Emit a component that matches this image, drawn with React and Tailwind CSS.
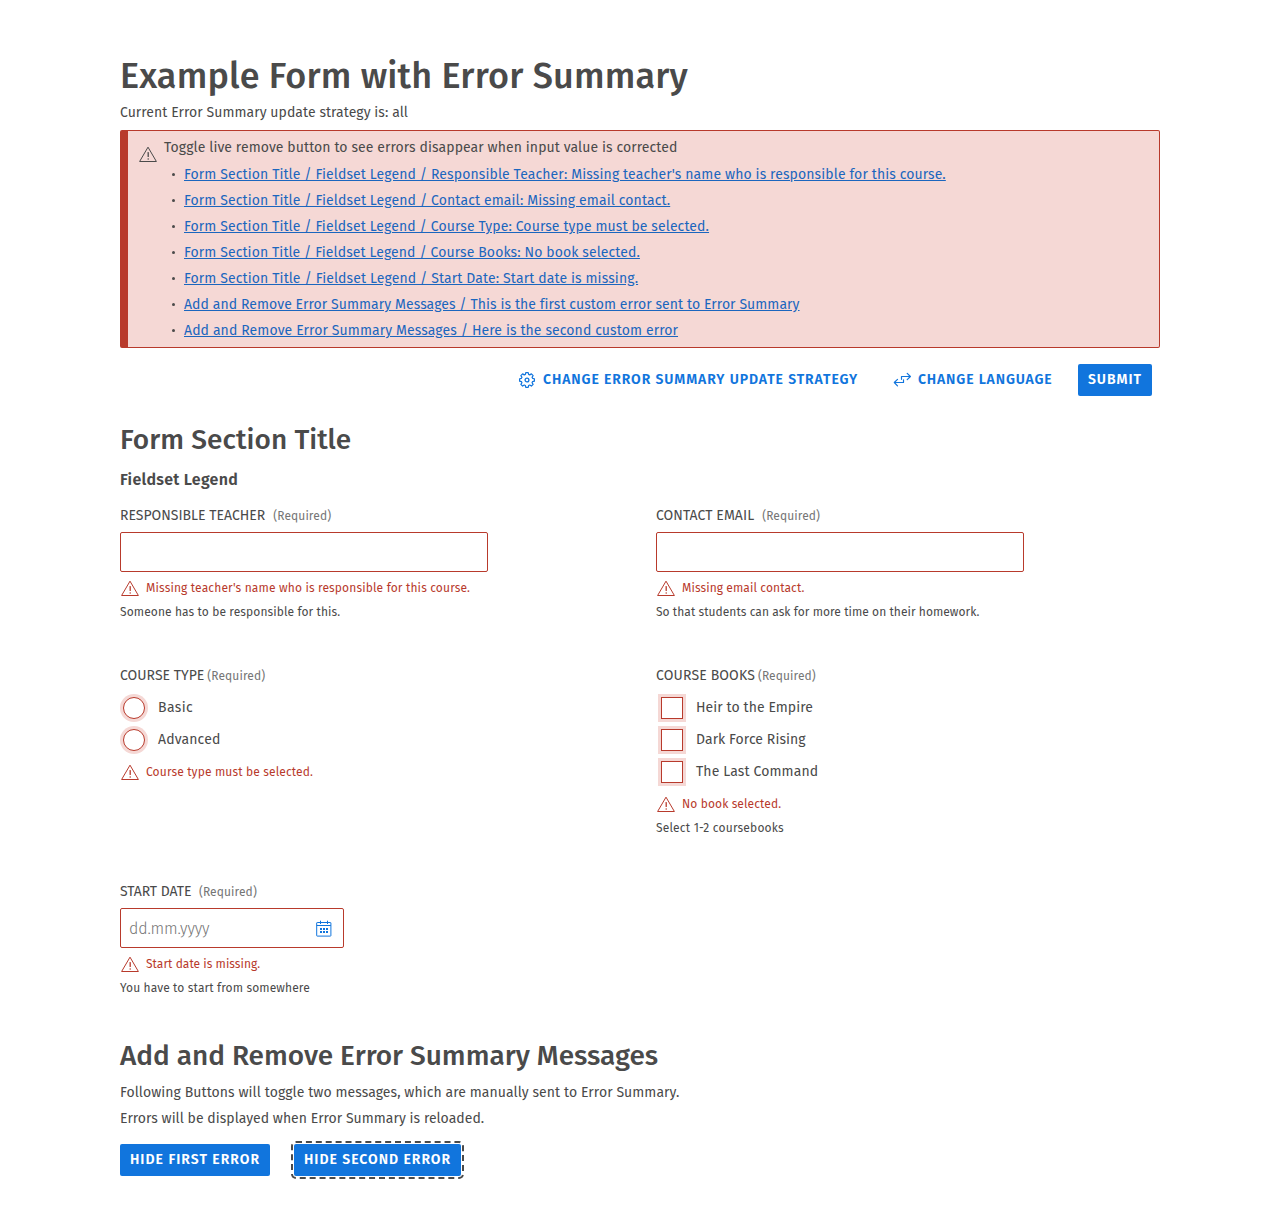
import React from "react";

const Text = ({ className = "", children, as: Tag = "span" }) => (
  <Tag className={"inline-block whitespace-nowrap " + className}>{children}</Tag>
);

const Warning = ({ className }) => (
  <svg viewBox="0 0 20 20" className={"size-5 shrink-0 " + className} fill="none" stroke="currentColor" strokeWidth="1" strokeLinejoin="round" strokeLinecap="round">
    <path d="M10.2 3.5 L18.4 17.5 H2 Z" />
    <path d="M10.2 8.6 V12.4" strokeWidth="1.3" />
    <circle cx="10.2" cy="14.9" r=".75" fill="currentColor" stroke="none" />
  </svg>
);

const Gear = () => (
  <svg viewBox="0 0 20 20" className="size-5" fill="none" stroke="currentColor" strokeWidth="1.45" strokeLinejoin="round">
    <path d="M8.6 2.4h2.8l.5 2.1 1.3.6 1.9-1.2 2 2-1.2 1.9.6 1.3 2.1.5v2.8l-2.1.5-.6 1.3 1.2 1.9-2 2-1.9-1.2-1.3.6-.5 2.1H8.6l-.5-2.1-1.3-.6-1.9 1.2-2-2 1.2-1.9-.6-1.3-2.1-.5V9.6l2.1-.5.6-1.3-1.2-1.9 2-2 1.9 1.2 1.3-.6z" transform="translate(1.4 .5) scale(.86)" />
    <circle cx="10" cy="10" r="1.9" strokeWidth="1.3" />
  </svg>
);

const Swap = () => (
  <svg viewBox="0 0 20 20" className="size-5" fill="none" stroke="currentColor" strokeWidth="1.2" strokeLinecap="round" strokeLinejoin="round">
    <path d="M18.2 6.5H9.5V9.3M15.2 3.3l3.2 3.2-3.2 3.2M2.4 12.5H11.5V9.8M5.5 9.4L2.3 12.5l3.2 3.3" />
  </svg>
);

const Calendar = () => (
  <svg viewBox="0 0 20 20" className="mt-0.5 size-5 text-[#1175dd]" fill="none" stroke="currentColor" strokeWidth="1">
    <rect x="2.7" y="3.5" width="14.2" height="13.6" rx=".5" />
    <path d="M2.7 6.5h14.2M6.5 1.7v3.3M13.5 1.7v3.3" />
    <path d="M6 10h8M6 13h8" strokeWidth="2" strokeDasharray="2 1" />
  </svg>
);

const links = [
  ["Form Section Title / Fieldset Legend / Responsible Teacher: Missing teacher's name who is responsible for this course.", "tracking-[0.11px]"],
  ["Form Section Title / Fieldset Legend / Contact email: Missing email contact.", "tracking-[0.113px]"],
  ["Form Section Title / Fieldset Legend / Course Type: Course type must be selected.", "tracking-[0.105px]"],
  ["Form Section Title / Fieldset Legend / Course Books: No book selected.", "tracking-[0.1px]"],
  ["Form Section Title / Fieldset Legend / Start Date: Start date is missing.", "tracking-[0.118px]"],
  ["Add and Remove Error Summary Messages / This is the first custom error sent to Error Summary", "tracking-[0.07px]"],
  ["Add and Remove Error Summary Messages / Here is the second custom error", "tracking-[0.105px]"],
];

const Label = ({ text, t = "", gap }) => (
  <div className="flex h-8 items-center">
    <Text className={t}>{text}</Text>
    <Text className={"text-xs text-[#757575] tracking-[0.1px] " + gap}>(Required)</Text>
  </div>
);

const Err = ({ text, t = "" }) => (
  <div className="flex h-6 items-center gap-1.5 text-xs text-[#b83a2c]">
    <Warning className="-mt-px" />
    <Text className={t}>{text}</Text>
  </div>
);

const Help = ({ text, t = "" }) => (
  <div className="flex h-6 items-center text-xs">
    <Text className={t}>{text}</Text>
  </div>
);

const Btn = ({ children, className = "" }) => (
  <button className={"flex h-8 items-center rounded-xs bg-[#1175dd] pl-2.5 font-semibold text-white " + className}>
    <Text>{children}</Text>
  </button>
);

const Input = () => <input className="mb-1 block h-10 w-[368px] rounded-xs border border-[#b83a2c] px-2" />;

export default function App() {
  return (
    <main className="min-h-[1208px] bg-white px-[120px] pt-14 font-['Fira_Sans','Noto_Sans',sans-serif] text-sm text-[#4a4a4a]">
      <h1 className="flex h-10 items-center font-['Fira_Sans_Medium','Fira_Sans',sans-serif] text-4xl">
        <Text className="tracking-[0.16px]">Example Form with Error Summary</Text>
      </h1>
      <div className="mt-1 flex h-[26px] items-center">
        <Text className="tracking-[0.055px]">Current Error Summary update strategy is: all</Text>
      </div>
      <section className="mt-1 flex h-[218px] rounded-xs border border-l-8 border-[#b83a2c] bg-[#f5d8d5] pl-2.5 pt-[3px]">
        <Warning className="mt-2.5" />
        <div className="ml-1.5">
          <div className="flex h-[27px] items-center">
            <Text className="tracking-[0.088px]">Toggle live remove button to see errors disappear when input value is corrected</Text>
          </div>
          <ul>
            {links.map(([text, t]) => (
              <li key={text} className="flex h-[26px] items-center gap-[9px] pl-2">
                <span className="size-[3px] rounded-full bg-current" />
                <Text as="a" className={"mt-0.5 text-[#1b66be] underline " + t}>{text}</Text>
              </li>
            ))}
          </ul>
        </div>
      </section>
      <div className="mt-4 flex h-8 items-center justify-end pr-2 font-semibold text-[#1175dd]">
        <div className="flex items-center gap-1.5">
          <Gear />
          <Text className="w-[316px] tracking-[0.9px]">CHANGE ERROR SUMMARY UPDATE STRATEGY</Text>
        </div>
        <div className="ml-[33px] mr-[25px] flex items-center gap-1.5">
          <Swap />
          <Text className="w-[135px] tracking-[0.85px]">CHANGE LANGUAGE</Text>
        </div>
        <Btn className="w-[74px] tracking-[0.96px]">SUBMIT</Btn>
      </div>
      <h2 className="mt-6 flex h-10 items-center font-['Fira_Sans_Medium','Fira_Sans',sans-serif] text-[28px]">
        <Text className="tracking-[0.08px]">Form Section Title</Text>
      </h2>
      <div className="mt-2 flex h-6 items-center text-base font-semibold">
        <Text className="tracking-[0.27px]">Fieldset Legend</Text>
      </div>
      <div className="mt-2 grid grid-cols-[536px_1fr]">
        <div className="h-40">
          <Label text="RESPONSIBLE TEACHER" gap="ml-2" />
          <Input />
          <Err text="Missing teacher's name who is responsible for this course." t="tracking-[0.147px]" />
          <Help text="Someone has to be responsible for this." t="tracking-[0.1px]" />
        </div>
        <div className="h-40">
          <Label text="CONTACT EMAIL" t="tracking-[0.06px]" gap="ml-2" />
          <Input />
          <Err text="Missing email contact." t="tracking-[0.09px]" />
          <Help text="So that students can ask for more time on their homework." t="tracking-[0.045px]" />
        </div>
        <div className="h-[216px]">
          <Label text="COURSE TYPE" gap="ml-[3px]" />
          {[["Basic", "tracking-[0.4px]"], ["Advanced", "tracking-[0.15px]"]].map(([text, t]) => (
            <div key={text} className="flex h-8 items-center">
              <span className="ml-[3.4px] size-[22px] rounded-full border border-[#b83a2c] bg-white ring-3 ring-[#f5d8d5]" />
              <Text className={"ml-[12.6px] " + t}>{text}</Text>
            </div>
          ))}
          <div className="mt-1">
            <Err text="Course type must be selected." t="tracking-[0.138px]" />
          </div>
        </div>
        <div className="h-[216px]">
          <Label text="COURSE BOOKS" t="tracking-[0.13px]" gap="ml-[3px]" />
          {[["Heir to the Empire", "tracking-[0.07px]"], ["Dark Force Rising", "tracking-[0.07px]"], ["The Last Command", "tracking-[0.12px]"]].map(([text, t]) => (
            <div key={text} className="flex h-8 items-center">
              <span className="ml-[5px] size-[22px] border border-[#b83a2c] bg-white ring-3 ring-[#f5d8d5]" />
              <Text className={"ml-[13px] " + t}>{text}</Text>
            </div>
          ))}
          <div className="mt-1">
            <Err text="No book selected." t="tracking-[0.1px]" />
          </div>
          <Help text="Select 1-2 coursebooks" t="tracking-[0.19px]" />
        </div>
        <div>
          <Label text="START DATE" t="tracking-[-0.05px]" gap="ml-[7.5px]" />
          <div className="mb-1 flex h-10 w-56 items-center justify-between rounded-xs border border-[#b83a2c] pl-2 pr-[9px]">
            <Text className="mt-0.5 text-base font-light tracking-[-0.15px] text-[#757575]">dd.mm.yyyy</Text>
            <Calendar />
          </div>
          <Err text="Start date is missing." t="tracking-[0.03px]" />
          <Help text="You have to start from somewhere" t="tracking-[0.12px]" />
        </div>
      </div>
      <h2 className="mt-9 flex h-10 items-center font-['Fira_Sans_Medium','Fira_Sans',sans-serif] text-[28px]">
        <Text className="tracking-[-0.03px]">Add and Remove Error Summary Messages</Text>
      </h2>
      <div className="mt-1 flex h-[26px] items-center">
        <Text className="tracking-[0.07px]">Following Buttons will toggle two messages, which are manually sent to Error Summary.</Text>
      </div>
      <div className="flex h-[26px] items-center">
        <Text className="tracking-[0.03px]">Errors will be displayed when Error Summary is reloaded.</Text>
      </div>
      <div className="mt-3 flex gap-6">
        <Btn className="w-[150px] tracking-[1px]">HIDE FIRST ERROR</Btn>
        <Btn className="w-[167px] tracking-[0.973px] outline-2 outline-offset-1 outline-dashed outline-[#4a4a4a]">HIDE SECOND ERROR</Btn>
      </div>
    </main>
  );
}
